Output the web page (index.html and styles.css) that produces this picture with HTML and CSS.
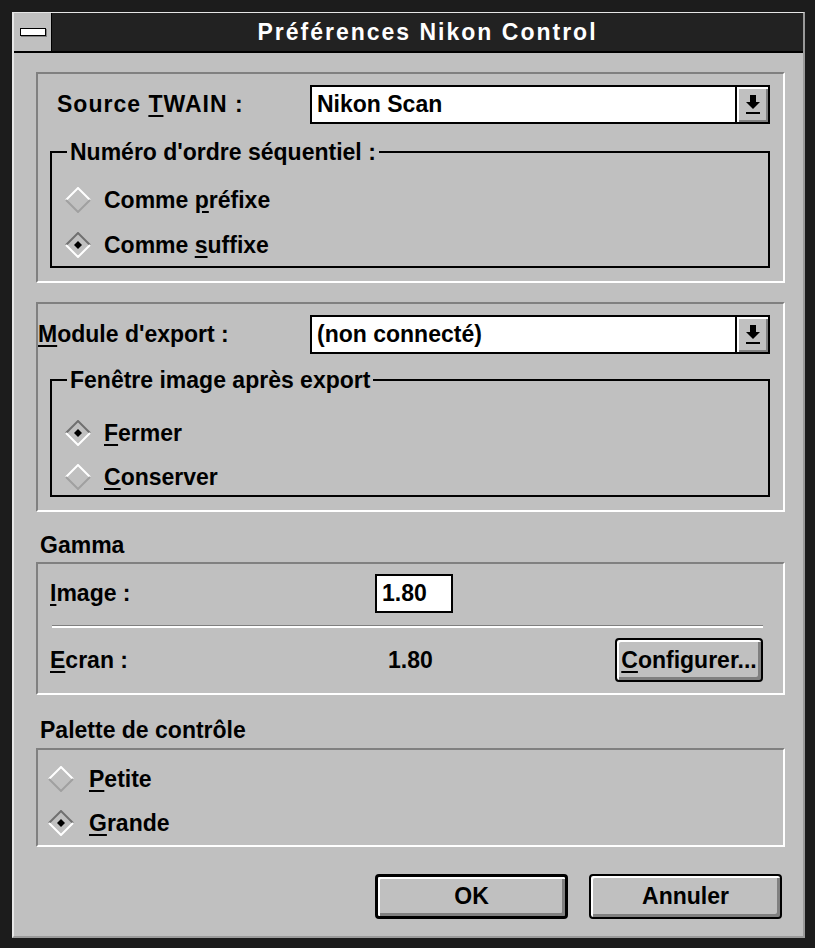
FILE: index.html
```html
<!DOCTYPE html>
<html lang="fr">
<head>
    <meta charset="UTF-8">
    <title>Préférences Nikon Control</title>
    <link rel="stylesheet" href="styles.css">
</head>
<body>
    <div class="window">
        <div class="frame">
            <div class="titlebar">
                <div class="sysmenu"><span class="sysmenu-bar"></span></div>
                <div class="title">Préférences Nikon Control</div>
            </div>

            <div class="client">
                <!-- TWAIN source -->
                <section class="panel panel-source">
                    <div class="field-row">
                        <span class="field-label label-source">Source <u>T</u>WAIN :</span>
                        <div class="combo">
                            <span class="combo-text">Nikon Scan</span>
                            <span class="combo-btn">
                                <svg width="16" height="20" viewBox="0 0 16 20"><rect x="5" y="0" width="6" height="7"/><polygon points="1,7 15,7 8,14"/><rect x="1" y="17" width="14" height="2"/></svg>
                            </span>
                        </div>
                    </div>
                    <fieldset class="group group-seq">
                        <legend>Numéro d'ordre séquentiel :</legend>
                        <div class="radio">
                            <svg class="diamond" width="26" height="26" viewBox="0 0 26 26"><path d="M1 13 L13 1 L25 13" class="edge-light"/><path d="M1 13 L13 25 L25 13" class="edge-dark"/></svg>
                            <span>Comme <u>p</u>réfixe</span>
                        </div>
                        <div class="radio">
                            <svg class="diamond" width="26" height="26" viewBox="0 0 26 26"><path d="M1 13 L13 1 L25 13" class="edge-shadow"/><path d="M1 13 L13 25 L25 13" class="edge-light"/><polygon points="13,9 17,13 13,17 9,13"/></svg>
                            <span>Comme <u>s</u>uffixe</span>
                        </div>
                    </fieldset>
                </section>

                <!-- export module -->
                <section class="panel panel-export">
                    <div class="field-row">
                        <span class="field-label label-export"><u>M</u>odule d'export :</span>
                        <div class="combo">
                            <span class="combo-text">(non connecté)</span>
                            <span class="combo-btn">
                                <svg width="16" height="20" viewBox="0 0 16 20"><rect x="5" y="0" width="6" height="7"/><polygon points="1,7 15,7 8,14"/><rect x="1" y="17" width="14" height="2"/></svg>
                            </span>
                        </div>
                    </div>
                    <fieldset class="group group-window">
                        <legend>Fenêtre image après export</legend>
                        <div class="radio">
                            <svg class="diamond" width="26" height="26" viewBox="0 0 26 26"><path d="M1 13 L13 1 L25 13" class="edge-shadow"/><path d="M1 13 L13 25 L25 13" class="edge-light"/><polygon points="13,9 17,13 13,17 9,13"/></svg>
                            <span><u>F</u>ermer</span>
                        </div>
                        <div class="radio">
                            <svg class="diamond" width="26" height="26" viewBox="0 0 26 26"><path d="M1 13 L13 1 L25 13" class="edge-light"/><path d="M1 13 L13 25 L25 13" class="edge-dark"/></svg>
                            <span><u>C</u>onserver</span>
                        </div>
                    </fieldset>
                </section>

                <!-- gamma -->
                <div class="section-label label-gamma">Gamma</div>
                <section class="panel panel-gamma">
                    <div class="gamma-row gamma-image">
                        <span class="gamma-label"><u>I</u>mage :</span>
                        <span class="text-input">1.80</span>
                    </div>
                    <div class="separator"></div>
                    <div class="gamma-row gamma-screen">
                        <span class="gamma-label"><u>E</u>cran :</span>
                        <span class="gamma-value">1.80</span>
                        <button class="btn btn-config"><span><u>C</u>onfigurer...</span></button>
                    </div>
                </section>

                <!-- control palette -->
                <div class="section-label label-palette">Palette de contrôle</div>
                <section class="panel panel-palette">
                    <div class="radio">
                        <svg class="diamond" width="26" height="26" viewBox="0 0 26 26"><path d="M1 13 L13 1 L25 13" class="edge-light"/><path d="M1 13 L13 25 L25 13" class="edge-dark"/></svg>
                        <span><u>P</u>etite</span>
                    </div>
                    <div class="radio">
                        <svg class="diamond" width="26" height="26" viewBox="0 0 26 26"><path d="M1 13 L13 1 L25 13" class="edge-shadow"/><path d="M1 13 L13 25 L25 13" class="edge-light"/><polygon points="13,9 17,13 13,17 9,13"/></svg>
                        <span><u>G</u>rande</span>
                    </div>
                </section>

                <div class="actions">
                    <button class="btn btn-default">OK</button>
                    <button class="btn">Annuler</button>
                </div>
            </div>
        </div>
    </div>
</body>
</html>
```

FILE: styles.css
```css
body {
    margin: 0;
    background: #1c1c1c;
    font-family: "Liberation Sans", Arial, sans-serif;
    font-weight: bold;
    font-size: 23px;
    color: #000;
}

u {
    text-decoration-thickness: 2px;
    text-underline-offset: 3px;
}

.window {
    width: 815px;
    height: 948px;
    box-sizing: border-box;
    padding: 12px 10px 10px 12px;
    background: #1c1c1c;
}

.frame {
    height: 100%;
    box-sizing: border-box;
    border-top: 1px solid #e6e6e6;
    border-left: 2px solid #e6e6e6;
    border-right: 2px solid #9a9a9a;
    border-bottom: 2px solid #9a9a9a;
    background: #c0c0c0;
    display: flex;
    flex-direction: column;
}

/* title bar */
.titlebar {
    display: flex;
    height: 38px;
    border-bottom: 2px solid #000;
}

.sysmenu {
    width: 37px;
    border-right: 1px solid #000;
    background: #c0c0c0;
    display: flex;
    align-items: center;
    justify-content: center;
}

.sysmenu-bar {
    width: 24px;
    height: 6px;
    border: 1px solid #000;
    background: #fff;
    box-shadow: 1px 1px 0 #808080;
}

.title {
    flex: 1;
    background: #222;
    color: #fff;
    text-align: center;
    line-height: 38px;
    letter-spacing: 2px;
}

/* client area */
.client {
    flex: 1;
    display: flex;
    flex-direction: column;
    padding: 19px 18px 0 22px;
}

.panel {
    border: 2px solid;
    border-color: #808080 #fff #fff #808080;
}

.panel-source {
    padding: 11px 13px 13px 12px;
}

.panel-export {
    margin-top: 19px;
    padding: 11px 13px 13px 12px;
}

.field-row {
    display: flex;
    align-items: center;
    height: 39px;
}

.field-label {
    width: 260px;
    box-sizing: border-box;
}

.label-source {
    padding-left: 7px;
    letter-spacing: 1px;
}

.label-export {
    margin-left: -12px;
    width: 272px;
}

.combo {
    flex: 1;
    display: flex;
    height: 39px;
    box-sizing: border-box;
    border: 2px solid #000;
    background: #fff;
}

.combo-text {
    flex: 1;
    padding-left: 5px;
    line-height: 35px;
}

.combo-btn {
    width: 31px;
    border-left: 2px solid #000;
    background: #c0c0c0;
    box-shadow: inset 2px 2px 0 #fff, inset -2px -2px 0 #808080;
    display: flex;
    align-items: center;
    justify-content: center;
}

/* group boxes */
.group {
    margin: 15px 0 0;
    padding: 17px 0 3px 13px;
    border: 2px solid #000;
    min-width: 0;
}

.group legend {
    padding: 0 3px;
    margin-left: 2px;
    line-height: 26px;
}

.group-window {
    margin-top: 13px;
    padding-top: 22px;
    padding-bottom: 0;
}

.radio {
    display: flex;
    align-items: center;
    gap: 13px;
    height: 36px;
}

.radio + .radio {
    margin-top: 9px;
}

.group-window .radio + .radio,
.panel-palette .radio + .radio {
    margin-top: 8px;
}

.diamond path {
    fill: none;
    stroke-width: 2;
}

.diamond .edge-light {
    stroke: #fff;
}

.diamond .edge-dark {
    stroke: #a0a0a0;
}

.diamond .edge-shadow {
    stroke: #707070;
}

/* gamma */
.section-label {
    padding-left: 4px;
}

.label-gamma {
    margin-top: 16px;
    line-height: 34px;
}

.label-palette {
    margin-top: 17px;
    line-height: 36px;
}

.panel-gamma {
    padding: 10px 20px 11px 12px;
}

.gamma-row {
    display: flex;
    align-items: center;
}

.gamma-image {
    height: 39px;
}

.gamma-screen {
    height: 44px;
    margin-top: 10px;
}

.gamma-label {
    width: 325px;
}

.text-input {
    width: 78px;
    height: 39px;
    box-sizing: border-box;
    border: 2px solid #000;
    background: #fff;
    padding-left: 5px;
    line-height: 35px;
}

.gamma-value {
    margin-left: 13px;
}

.separator {
    margin: 12px 0 0 2px;
    border-top: 1px solid #808080;
    border-bottom: 2px solid #fff;
}

/* push buttons */
.btn {
    box-sizing: border-box;
    height: 45px;
    width: 193px;
    padding: 0;
    border: 2px solid #000;
    border-radius: 4px;
    background: #c0c0c0;
    box-shadow: inset 2px 2px 0 #fff, inset -3px -3px 0 #808080;
    font: inherit;
    color: #000;
    display: flex;
    align-items: center;
    justify-content: center;
}

.btn-default {
    border-width: 3px;
}

.btn-config {
    width: 148px;
    height: 44px;
    margin-left: auto;
}

/* palette */
.panel-palette {
    padding: 11px 0 4px 10px;
}

.panel-palette .radio {
    gap: 15px;
}

.actions {
    margin-top: 27px;
    display: flex;
    justify-content: flex-end;
    gap: 21px;
    padding-right: 3px;
}
```
